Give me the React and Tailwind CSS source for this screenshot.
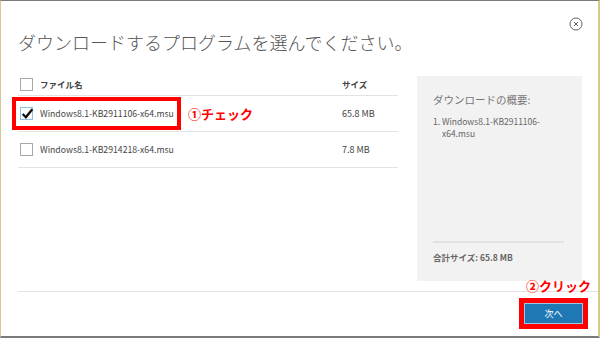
import React from "react";

const files = [
  { name: "Windows8.1-KB2911106-x64.msu", size: "65.8 MB", checked: true },
  { name: "Windows8.1-KB2914218-x64.msu", size: "7.8 MB", checked: false },
];

const CheckBox = ({ checked }) =>
  checked ? (
    <div className="relative h-[13px] w-[13px] shrink-0 border border-[#8fc0e6] bg-white">
      <svg
        viewBox="0 0 14 14"
        className="absolute -left-[1px] -top-[2px] h-[15px] w-[15px]"
      >
        <path
          d="M2.5 7.5 L5.5 10.5 L11.5 3"
          fill="none"
          stroke="#111"
          strokeWidth="2.2"
        />
      </svg>
    </div>
  ) : (
    <div className="h-[13px] w-[13px] shrink-0 border border-[#a8a8a8] bg-white" />
  );

const CloseIcon = () => (
  <svg viewBox="0 0 14 14" className="h-[14px] w-[14px]">
    <circle cx="7" cy="7" r="6" fill="none" stroke="#666" strokeWidth="1" />
    <path d="M5 5 L9 9 M9 5 L5 9" stroke="#666" strokeWidth="1" />
  </svg>
);

export default function App() {
  return (
    <div className="relative flex h-[338px] w-[600px] flex-col overflow-hidden border-t border-l border-r-2 border-b-2 border-t-[#7a7a7a] border-l-[#dcc690] border-r-[#dcc690] border-b-[#7a7a7a] bg-white font-['Noto_Sans_CJK_JP',sans-serif] text-[#444]">
      {/* close button */}
      <div className="absolute right-[15px] top-[16px]">
        <CloseIcon />
      </div>

      <h1 className="ml-[17px] mt-[29px] text-[18px] font-light leading-[24px] text-[#555]">
        ダウンロードするプログラムを選んでください。
      </h1>

      <div className="ml-[17px] mt-[22px] flex items-start gap-[19px]">
        {/* file list */}
        <div className="w-[380px]">
          <div className="flex h-[20px] items-center border-b border-[#e3e3e3] pb-[3px]">
            <div className="ml-[2px]">
              <CheckBox checked={false} />
            </div>
            <span className="ml-[7px] w-[302px] text-[8.5px] font-bold">
              ファイル名
            </span>
            <span className="text-[8.5px] font-bold">サイズ</span>
          </div>

          {files.map((f, i) => (
            <div
              key={f.name}
              className="relative flex h-[36px] items-center border-b border-[#e3e3e3]"
            >
              <div className="ml-[2px]">
                <CheckBox checked={f.checked} />
              </div>
              <span className="ml-[7px] w-[302px] text-[8.7px]">{f.name}</span>
              <span className="text-[9px]">{f.size}</span>

              {i === 0 && (
                <>
                  <div className="absolute -left-[6px] top-[1px] h-[33px] w-[169px] border-4 border-[#ff0000]" />
                  <span className="absolute left-[170px] top-1/2 -translate-y-1/2 text-[13px] font-bold text-[#ff0000]">
                    ①チェック
                  </span>
                </>
              )}
            </div>
          ))}
        </div>

        {/* summary panel */}
        <div className="flex h-[205px] w-[165px] flex-col bg-[#f2f2f2] pl-[16px] pr-[18px] text-[#777]">
          <p className="mt-[17px] text-[10.5px] leading-[14px]">
            ダウンロードの概要:
          </p>
          <div className="mt-[8px] flex text-[8.5px] leading-[12px] text-[#666]">
            <span className="w-[9px] shrink-0">1.</span>
            <span>
              Windows8.1-KB2911106-
              <br />
              x64.msu
            </span>
          </div>
          <div className="mt-auto h-[2px] bg-[#e2e2e2]" />
          <p className="mb-[18px] mt-[8px] text-[8.5px] font-bold leading-[12px] text-[#666]">
            合計サイズ: 65.8 MB
          </p>
        </div>
      </div>

      <div className="ml-[17px] mt-[10px] h-[1px] bg-[#e3e3e3]" />

      <div className="relative mr-[10px] mt-[6px] flex justify-end">
        <span className="absolute right-[-3px] top-[-20px] text-[13px] font-bold leading-[16px] text-[#ff0000]">
          ②クリック
        </span>
        <div className="border-[5px] border-[#ff0000]">
          <button className="flex h-[21px] w-[59px] items-center justify-center border border-[#9cc6e6] bg-[#1f78b4] text-[9px] text-white">
            次へ
          </button>
        </div>
      </div>
    </div>
  );
}
